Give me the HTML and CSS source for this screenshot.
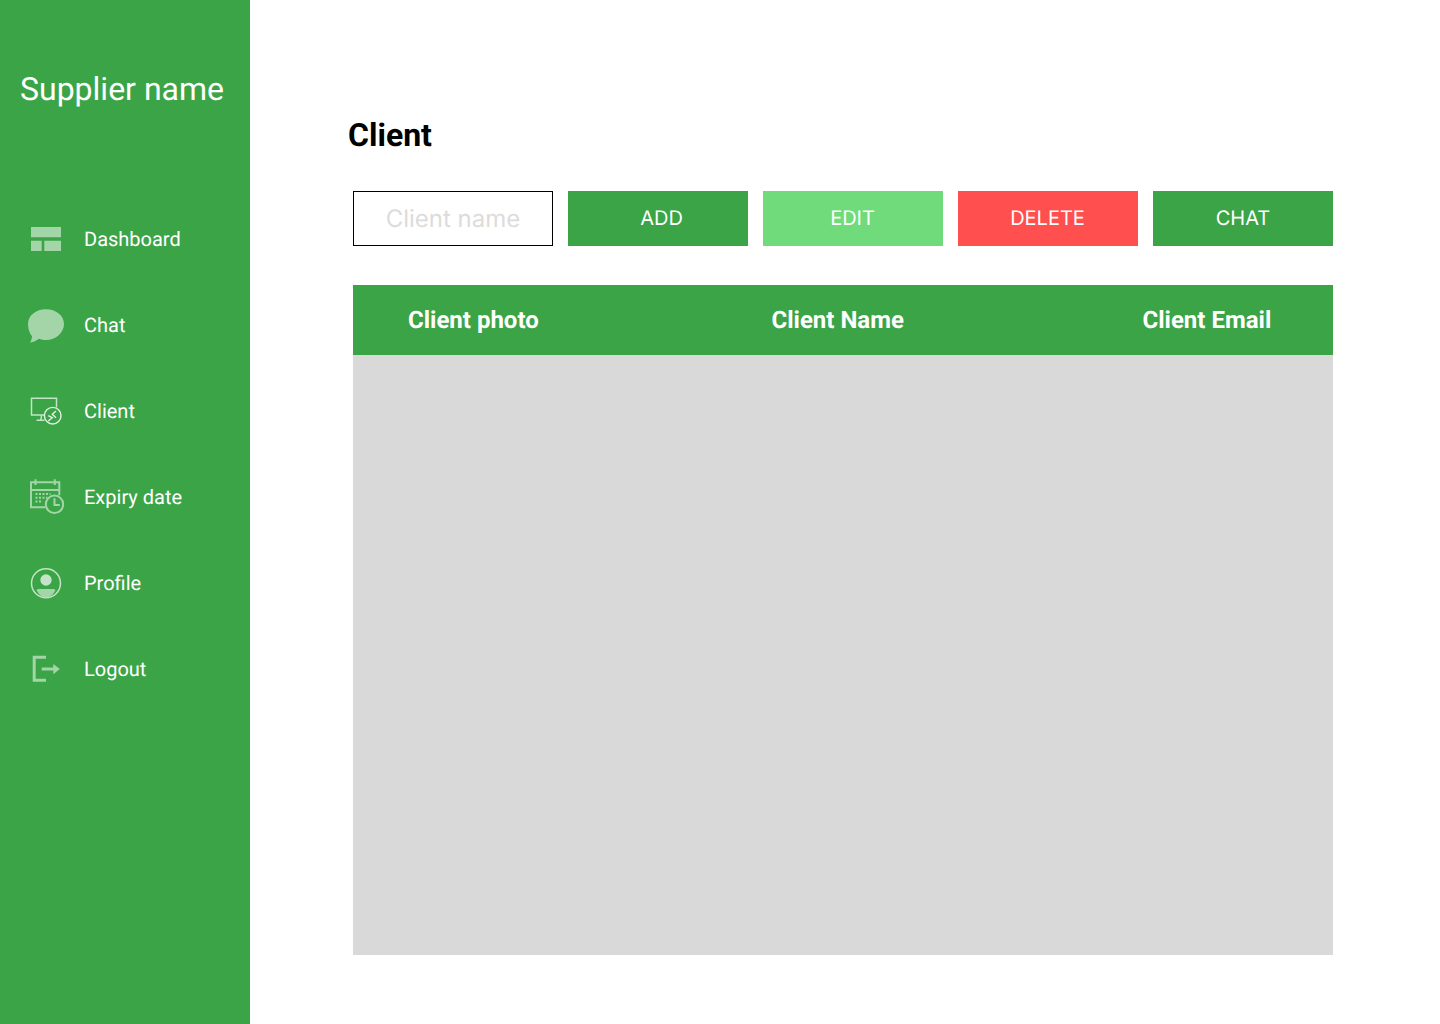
FILE: index.html
```html
<!DOCTYPE html>
<html>
  <head>
    <meta charset="UTF-8">
    <title>Client</title>
    <link rel="stylesheet" href="styles.css">
  </head>
  <body>
    <div class="sidebar">
      <div class="brand">Supplier name</div>
      <ul class="nav">
        <li>
          <svg class="icon" viewBox="0 0 40 40">
            <path class="solid" d="M5 8h30v10.300H5zM5 21.700h10.700V32H5zM18.300 21.700H35V32H18.300z"/>
          </svg>
          <span>Dashboard</span>
        </li>
        <li>
          <svg class="icon" viewBox="0 0 40 40">
            <path class="solid" d="M20 4.300C30 4.300 38 10.500 38 19S30 35 20 35c-2.500 0-5-.4-7-1.200-2.500 2-5.500 3.300-9 3.900 1.200-2 1.800-4 2-6.500C3.500 28 2 24 2 19 2 10.500 10 4.300 20 4.300z"/>
          </svg>
          <span>Chat</span>
        </li>
        <li>
          <svg class="icon" viewBox="0 0 40 40">
            <path class="bright-soft" d="M18 24H5.500V7.200h25v9.300M15.500 24c0 2.500-.5 4.200-1 5M10.500 29.200h8"/>
            <circle class="bright" cx="26.700" cy="24.700" r="8.300"/>
            <path class="bright" d="M22.300 24.700l4 2-4 3.300M30 20l-3.700 3.300 3.700 3.400"/>
          </svg>
          <span>Client</span>
        </li>
        <li>
          <svg class="icon" viewBox="0 0 40 40">
            <path class="line" d="M19.500 30.200H5V5.200h28.300v13M5 13h28.300M9.500 2.300V8M28.800 2.300V8"/>
            <path class="dots" d="M9.500 17h15M9.500 20.800h12M9.500 24.600h6"/>
            <circle class="line" cx="28.500" cy="27.300" r="8.700"/>
            <path class="line" d="M28.500 21.300V28h5.300"/>
          </svg>
          <span>Expiry date</span>
        </li>
        <li>
          <svg class="icon" viewBox="0 0 40 40">
            <circle class="bright-soft" cx="20" cy="20.300" r="14.500"/>
            <circle class="solid-light" cx="20" cy="17" r="5.700"/>
            <path class="solid" d="M10.700 27.500c0-1 1-1.500 2-1.500h14.600c1 0 2 .5 2 1.500-2.300 4.500-5.500 7-9.300 7s-7-2.500-9.300-7z"/>
          </svg>
          <span>Profile</span>
        </li>
        <li>
          <svg class="icon" viewBox="0 0 40 40">
            <path class="thick" d="M20 8.200H8.200v23H20"/>
            <path class="thick" d="M15.700 20H28"/>
            <path class="solid" d="M27.300 15l6.500 5-6.500 5.300z"/>
          </svg>
          <span>Logout</span>
        </li>
      </ul>
    </div>
    <div class="main">
      <h1>Client</h1>
      <div class="toolbar">
        <input class="search" type="text" placeholder="Client name">
        <button class="btn btn-add" type="button">ADD</button>
        <button class="btn btn-edit" type="button">EDIT</button>
        <button class="btn btn-delete" type="button">DELETE</button>
        <button class="btn" type="button">CHAT</button>
      </div>
      <div class="table">
        <div class="table-head">
          <div>Client photo</div>
          <div>Client Name</div>
          <div>Client Email</div>
        </div>
        <div class="table-body"></div>
      </div>
    </div>
  </body>
</html>
```

FILE: styles.css
```css
body {
  background-color: #fff;
  display: flex;
  font-family: Roboto, sans-serif;
  height: 1024px;
  margin: 0;
  overflow: hidden;
  padding: 0;
  text-rendering: geometricPrecision;
}

.sidebar {
  background-color: #3ba447;
  color: #fff;
  flex: 0 0 250px;
  height: 1024px;
}

.brand {
  font-size: 32px;
  line-height: 38px;
  padding: 70px 0 0 20px;
}

.nav {
  list-style: none;
  margin: 111px 0 0;
  padding: 0;
}

.nav li {
  align-items: center;
  display: flex;
  font-size: 20px;
  height: 40px;
  margin-bottom: 46px;
  padding-left: 26px;
}

.nav span {
  margin-left: 18px;
}

.icon {
  flex: 0 0 40px;
  height: 40px;
  width: 40px;
}

.solid {
  fill: #a3d5a9;
}

.solid-light {
  fill: #c4e4c7;
}

.line {
  fill: none;
  stroke: #a3d5a9;
  stroke-width: 2;
}

.bright {
  fill: none;
  stroke: #e4f3e6;
  stroke-width: 1.400;
}

.bright-soft {
  fill: none;
  stroke: #c4e4c7;
  stroke-width: 1.500;
}

.dots {
  fill: none;
  stroke: #a3d5a9;
  stroke-dasharray: 2 1.500;
  stroke-width: 2;
}

.thick {
  fill: none;
  stroke: #a3d5a9;
  stroke-width: 3;
}

.main {
  flex: 1;
  padding: 116px 0 0 98px;
}

h1 {
  color: #000;
  font-size: 32px;
  font-weight: 700;
  line-height: 38px;
  margin: 0;
}

.toolbar {
  display: flex;
  gap: 15px;
  margin: 37px 0 0 5px;
}

.search {
  border: 1px solid #000;
  box-sizing: border-box;
  font-family: Inter, sans-serif;
  font-size: 24px;
  height: 55px;
  padding: 0;
  text-align: center;
  text-rendering: geometricPrecision;
  width: 200px;
}

.search::placeholder {
  color: #dcdcdc;
  opacity: 1;
}

.btn {
  background-color: #3ba447;
  border: none;
  color: #fff;
  font-family: Inter, sans-serif;
  font-size: 20px;
  height: 55px;
  padding: 0 0 2px;
  text-rendering: geometricPrecision;
  width: 180px;
}

.btn-add {
  padding-left: 7px;
}

.btn-edit {
  background-color: #6fdb7b;
  padding-right: 1px;
}

.btn-delete {
  background-color: #ff4f4f;
  padding-right: 1px;
}

.table {
  margin: 39px 0 0 5px;
  width: 980px;
}

.table-head {
  align-items: center;
  background-color: #3ba447;
  color: #fff;
  display: grid;
  font-size: 24px;
  font-weight: 700;
  grid-template-columns: 363.500px 371px 1fr;
  height: 70px;
  padding-left: 55px;
}

.table-body {
  background-color: #d9d9d9;
  height: 600px;
}
```
